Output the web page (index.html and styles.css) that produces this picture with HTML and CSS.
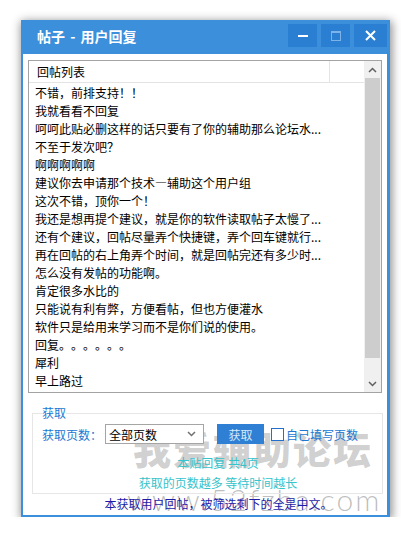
FILE: index.html
```html
<!DOCTYPE html>
<html lang="zh-CN">
<head>
<meta charset="utf-8">
<title>帖子 - 用户回复</title>
<link rel="stylesheet" href="styles.css">
</head>
<body>
<div class="window">
  <div class="titlebar">
    <span class="title">帖子 - 用户回复</span>
    <div class="ctrls">
      <div class="btn btn-min"><svg width="10" height="10" viewBox="0 0 10 10"><rect x="0" y="4" width="10" height="2" fill="#fff"/></svg></div>
      <div class="btn btn-max"><svg width="10" height="10" viewBox="0 0 10 10"><rect x="0.5" y="0.5" width="9" height="9" fill="none" stroke="#7db3e8" stroke-width="1"/><rect x="0.5" y="0.5" width="9" height="1.5" fill="#7db3e8"/></svg></div>
      <div class="btn btn-close"><svg width="11" height="11" viewBox="0 0 11 11"><path d="M1 1 L10 10 M10 1 L1 10" stroke="#fff" stroke-width="2" fill="none"/></svg></div>
    </div>
  </div>
  <div class="client">
    <div class="listbox">
      <div class="listmain">
        <div class="header"><div class="hcol">回帖列表</div></div>
        <div class="rows">
          <div class="row">不错，前排支持！！</div>
          <div class="row">我就看看不回复</div>
          <div class="row">呵呵此贴必删这样的话只要有了你的辅助那么论坛水...</div>
          <div class="row">不至于发次吧？</div>
          <div class="row">啊啊啊啊啊</div>
          <div class="row">建议你去申请那个技术—辅助这个用户组</div>
          <div class="row">这次不错，顶你一个！</div>
          <div class="row">我还是想再提个建议，就是你的软件读取帖子太慢了...</div>
          <div class="row">还有个建议，回帖尽量弄个快捷键，弄个回车键就行...</div>
          <div class="row">再在回帖的右上角弄个时间，就是回帖完还有多少时...</div>
          <div class="row">怎么没有发帖的功能啊。</div>
          <div class="row">肯定很多水比的</div>
          <div class="row">只能说有利有弊，方便看帖，但也方便灌水</div>
          <div class="row">软件只是给用来学习而不是你们说的使用。</div>
          <div class="row">回复。。。。。。</div>
          <div class="row">犀利</div>
          <div class="row">早上路过</div>
        </div>
      </div>
      <div class="vscroll">
        <div class="sarrow"><svg width="9" height="6" viewBox="0 0 9 6"><path d="M1 5 L4.5 1.5 L8 5" stroke="#606060" stroke-width="1.5" fill="none"/></svg></div>
        <div class="thumb"></div>
        <div class="track"></div>
        <div class="sarrow"><svg width="9" height="6" viewBox="0 0 9 6"><path d="M1 1 L4.5 4.5 L8 1" stroke="#606060" stroke-width="1.5" fill="none"/></svg></div>
      </div>
    </div>
    <fieldset class="group">
      <legend class="legend">获取</legend>
      <div class="ctrlrow">
        <span class="lbl">获取页数：</span>
        <div class="select"><span>全部页数</span><svg width="9" height="6" viewBox="0 0 9 6"><path d="M1 1 L4.5 4.5 L8 1" stroke="#707070" stroke-width="1.5" fill="none"/></svg></div>
        <div class="fetch">获取</div>
        <span class="check"></span>
        <span class="chklbl">自己填写页数</span>
      </div>
      <div class="info">本贴回复 共4页</div>
      <div class="info">获取的页数越多 等待时间越长</div>
    </fieldset>
    <div class="note">本获取用户回帖，被筛选剩下的全是中文。</div>
    <div class="wm wm-cn">我爱辅助论坛</div>
    <div class="wm wm-url">www.52fzba.com</div>
  </div>
</div>
</body>
</html>
```
FILE: styles.css
```css
* { box-sizing: border-box; }
html, body { margin: 0; padding: 0; background: #fff; }
body {
  font-family: "Noto Sans CJK SC", "Microsoft YaHei", sans-serif;
  font-size: 12px;
  color: #000;
  text-spacing-trim: space-all;
}
.window {
  margin: 20px 0 0 21px;
  width: 369px;
  height: 497px;
  background: #3b8fdb;
  padding: 0 3px 2px 2px;
  display: flex;
  flex-direction: column;
  box-shadow: 1px 2px 9px 1px rgba(0, 0, 0, 0.45);
}
.titlebar {
  height: 34px;
  display: flex;
  align-items: flex-start;
  flex: none;
}
.title {
  color: #fff;
  font-weight: bold;
  font-size: 14px;
  line-height: 20px;
  margin: 6px 0 0 14px;
  word-spacing: 2px;
}
.ctrls {
  margin-left: auto;
  margin-top: 4px;
  display: flex;
  gap: 4px;
}
.btn {
  height: 23px;
  width: 29px;
  background: #2a7fd3;
  display: flex;
  align-items: center;
  justify-content: center;
}
.btn-close { width: 33px; }
.client {
  flex: 1;
  background: #fff;
  position: relative;
  z-index: 0;
  display: flex;
  flex-direction: column;
}
.listbox {
  margin: 6px 5px 0 5px;
  height: 333px;
  border: 1px solid #a3a3a3;
  display: flex;
  flex: none;
}
.listmain {
  flex: 1;
  min-width: 0;
}
.header {
  height: 22px;
  border-bottom: 1px solid #e4e4e4;
}
.hcol {
  width: 301px;
  height: 21px;
  border-right: 1px solid #e4e4e4;
  padding-left: 8px;
  line-height: 21px;
}
.rows { padding-top: 1px; }
.row {
  height: 18px;
  line-height: 18px;
  padding-left: 6px;
  white-space: nowrap;
  overflow: hidden;
  width: 301px;
}
.vscroll {
  width: 17px;
  background: #f0f0f0;
  display: flex;
  flex-direction: column;
  flex: none;
}
.sarrow {
  height: 17px;
  display: flex;
  align-items: center;
  justify-content: center;
  flex: none;
}
.thumb {
  height: 280px;
  margin: 0 1px;
  background: #cdcdcd;
  flex: none;
}
.track { flex: 1; }
.group {
  margin: 12px 4px 0 9px;
  padding: 0 0 0 9px;
  border: 1px solid #e6e6e6;
  min-width: 0;
}
.legend {
  padding: 0;
  line-height: 16px;
  color: #2278d2;
}
.ctrlrow {
  display: flex;
  align-items: center;
  height: 20px;
  margin-top: 3px;
  position: relative;
  z-index: 1;
}
.lbl {
  width: 63px;
  color: #2278d2;
  white-space: nowrap;
}
.select {
  width: 99px;
  height: 20px;
  border: 1px solid #a5a5a5;
  background: #fff;
  display: flex;
  align-items: center;
  justify-content: space-between;
  padding: 0 7px 0 3px;
}
.fetch {
  margin-left: 13px;
  width: 47px;
  height: 20px;
  background: #2f80d4;
  color: #d6e8fa;
  display: flex;
  align-items: center;
  justify-content: center;
}
.check {
  margin-left: 7px;
  width: 13px;
  height: 13px;
  border: 1px solid #2270cc;
  background: #fff;
}
.chklbl {
  margin-left: 2px;
  color: #2278d2;
}
.info {
  position: relative;
  z-index: 1;
  text-align: center;
  line-height: 20px;
  color: #36c3cb;
  padding-left: 12px;
}
.ctrlrow + .info { margin-top: 9px; }
.note {
  text-align: center;
  line-height: 18px;
  color: #1c1ca6;
  padding-left: 27px;
  margin-top: 1px;
  position: relative;
  z-index: 1;
}
.wm {
  position: absolute;
  z-index: -1;
  white-space: nowrap;
  pointer-events: none;
}
.wm-cn {
  left: 110px;
  top: 374px;
  font-size: 38px;
  line-height: 40px;
  font-weight: 900;
  letter-spacing: 2px;
  color: rgba(110, 110, 110, 0.32);
}
.wm-url {
  left: 104px;
  top: 430px;
  font-family: Lato, "Open Sans", sans-serif;
  font-weight: 300;
  font-size: 30px;
  line-height: 30px;
  letter-spacing: 2px;
  color: rgba(110, 110, 110, 0.45);
}
```
